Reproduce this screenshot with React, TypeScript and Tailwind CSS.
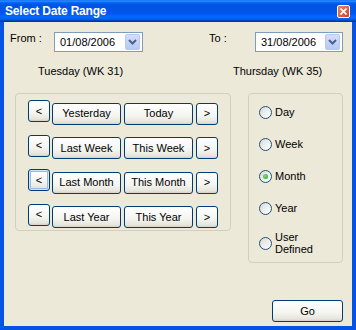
import React from "react";

const font = "font-['Liberation_Sans',Arial,sans-serif]";

function XpButton({ children, w, focus }: { children: React.ReactNode; w: string; focus?: boolean }) {
  return (
    <button
      type="button"
      className={`${w} h-[22px] shrink-0 rounded-[3px] border border-[#003C74] bg-[linear-gradient(to_bottom,#ffffff_0%,#f4f4f0_60%,#e6e5dc_90%,#d6d0c5_100%)] text-[11px] leading-none text-black ${
        focus ? "shadow-[inset_0_0_0_1px_#CEE7FF,inset_0_0_0_2px_#98B8EA]" : ""
      }`}
    >
      {children}
    </button>
  );
}

function DateBox({ value, w }: { value: string; w: string }) {
  return (
    <div className={`${w} flex h-[20px] items-center border border-[#7F9DB9] bg-white pr-[2px]`}>
      <span className="flex-1 pl-[5px] text-[11px] leading-none text-black">{value}</span>
      <div className="flex h-[16px] w-[15px] items-center justify-center rounded-[2px] border border-[#B6C8F2] bg-[linear-gradient(to_bottom,#D2DEFB,#B6CAF7)]">
        <svg width="9" height="6" viewBox="0 0 9 6">
          <path d="M1 1 L4.5 4.5 L8 1" fill="none" stroke="#4D6185" strokeWidth="2" />
        </svg>
      </div>
    </div>
  );
}

function Radio({ label, checked }: { label: React.ReactNode; checked?: boolean }) {
  return (
    <div className="flex h-[32px] items-center">
      <div className="flex h-[13px] w-[13px] shrink-0 items-center justify-center rounded-full border border-[#1C5180] bg-[linear-gradient(135deg,#DCDCD5,#ffffff)]">
        {checked && <div className="h-[5px] w-[5px] rounded-full bg-[radial-gradient(circle_at_40%_40%,#7CE07C,#1FA21F)]" />}
      </div>
      <span className="ml-[3px] text-[11px] leading-[12px] text-black">{label}</span>
    </div>
  );
}

const rows = [
  ["Yesterday", "Today"],
  ["Last Week", "This Week"],
  ["Last Month", "This Month"],
  ["Last Year", "This Year"],
];

export default function App() {
  return (
    <div className={`flex h-[330px] w-[356px] flex-col ${font}`}>
      <div className="flex h-[22px] shrink-0 items-center justify-between bg-[linear-gradient(to_bottom,#0058ee_0%,#3593ff_4%,#288eff_6%,#127dff_8%,#036ffc_10%,#0262ee_14%,#0057e5_20%,#0054e3_24%,#0055eb_56%,#005bf5_66%,#026afe_76%,#0062ef_86%,#0052d6_92%,#0040ab_94%,#003092_100%)] pl-[5px] pr-[6px]">
        <span className="text-[12px] font-bold tracking-[-0.2px] text-white">Select Date Range</span>
        <div className="flex h-[13px] w-[13px] items-center justify-center rounded-[2px] border border-white bg-[linear-gradient(135deg,#E8846E,#D6411E)]">
          <svg width="7" height="7" viewBox="0 0 7 7">
            <path d="M0.5 0.5 L6.5 6.5 M6.5 0.5 L0.5 6.5" stroke="white" strokeWidth="1.6" />
          </svg>
        </div>
      </div>

      <div className="flex flex-1 flex-col border-x-4 border-b-4 border-[#0553E6] bg-[#ECE9D8]">
        <div className="mt-[10px] flex items-start">
          <span className="ml-[6px] w-[44px] text-[11px] leading-[13px] text-black">From :</span>
          <DateBox value="01/08/2006" w="w-[89px]" />
          <span className="ml-[66px] w-[46px] text-[11px] leading-[13px] text-black">To :</span>
          <DateBox value="31/08/2006" w="w-[88px]" />
        </div>

        <div className="mt-[12px] flex text-[11px] leading-[14px] text-black">
          <span className="ml-[34px] w-[195px]">Tuesday (WK 31)</span>
          <span>Thursday (WK 35)</span>
        </div>

        <div className="mt-[15px] flex items-start">
          <div className="ml-[11px] flex h-[138px] w-[216px] flex-col gap-[10px] rounded-[4px] border border-[#D0D0BF] pl-[12px] pt-[6px]">
            {rows.map(([a, b], i) => (
              <div key={a} className="flex">
                <XpButton w="w-[22px]" focus={i === 2}>&lt;</XpButton>
                <div className="ml-[2px]">
                  <XpButton w="w-[69px]">{a}</XpButton>
                </div>
                <div className="ml-[3px]">
                  <XpButton w="w-[69px]">{b}</XpButton>
                </div>
                <div className="ml-[3px]">
                  <XpButton w="w-[22px]">&gt;</XpButton>
                </div>
              </div>
            ))}
          </div>

          <div className="ml-[17px] flex h-[170px] w-[95px] flex-col rounded-[4px] border border-[#D0D0BF] pl-[10px] pt-[2px]">
            <Radio label="Day" />
            <Radio label="Week" />
            <Radio label="Month" checked />
            <Radio label="Year" />
            <div className="mt-[3px]">
              <Radio
                label={
                  <>
                    User
                    <br />
                    Defined
                  </>
                }
              />
            </div>
          </div>
        </div>

        <div className="mt-auto flex justify-end pb-[4px] pr-[9px]">
          <XpButton w="w-[71px]">Go</XpButton>
        </div>
      </div>
    </div>
  );
}
